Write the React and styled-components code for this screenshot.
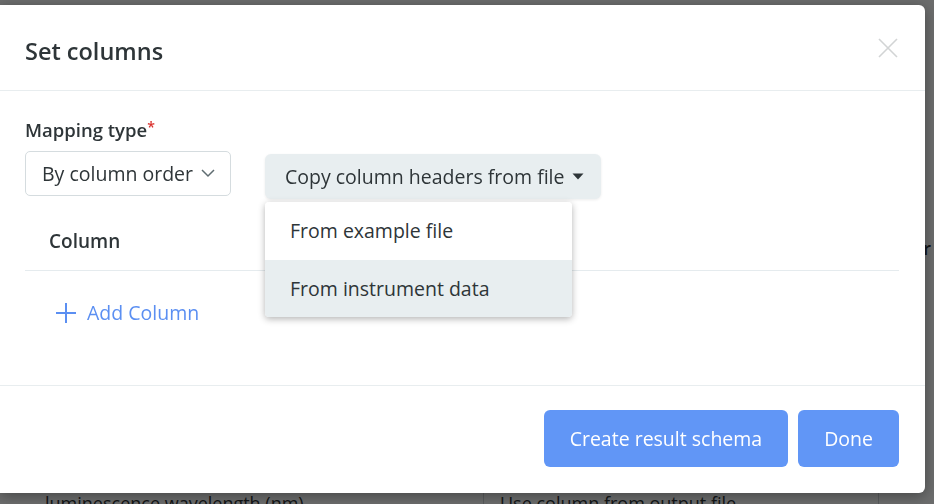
import React from "react";
import styled, { createGlobalStyle } from "styled-components";

const GlobalStyle = createGlobalStyle`
  html, body {
    margin: 0;
    padding: 0;
    height: 100%;
    overflow: hidden;
  }
  body {
    font-family: "Open Sans", "Liberation Sans", sans-serif;
    color: #2e3538;
  }
`;

const App = () => {
  return (
    <>
      <GlobalStyle />
      <Page>
        <PageHeadRow>
          <PageHead>Parameter</PageHead>
        </PageHeadRow>
        <PageRow>
          <PageLabel>luminescence wavelength (nm)</PageLabel>
          <PageSelect>Use column from output file</PageSelect>
        </PageRow>
      </Page>

      <Backdrop>
        <Modal>
          <Header>
            <Title>Set columns</Title>
            <CloseBtn aria-label="close">
              <svg width="20" height="20" viewBox="0 0 20 20">
                <path d="M1 1 L19 19 M19 1 L1 19" stroke="#d2d4d5" strokeWidth="1.6" fill="none" />
              </svg>
            </CloseBtn>
          </Header>

          <Body>
            <Label>
              Mapping type<Required>*</Required>
            </Label>
            <Controls>
              <Select>
                By column order
                <svg width="14" height="9" viewBox="0 0 14 9">
                  <path d="M1 1 L7 7 L13 1" stroke="#5f6c71" strokeWidth="1.5" fill="none" />
                </svg>
              </Select>
              <MenuWrap>
                <CopyBtn>
                  Copy column headers from file
                  <svg width="12" height="7" viewBox="0 0 12 7">
                    <path d="M0.5 0.5 L11.5 0.5 L6 6.5 Z" fill="#2e3538" />
                  </svg>
                </CopyBtn>
                <Menu>
                  <MenuItem>From example file</MenuItem>
                  <MenuItem active>From instrument data</MenuItem>
                </Menu>
              </MenuWrap>
            </Controls>

            <TableHead>
              <Th>Column</Th>
            </TableHead>

            <AddBtn>
              <svg width="22" height="22" viewBox="0 0 22 22">
                <path d="M11 1 V21 M1 11 H21" stroke="#5b8ff2" strokeWidth="2" fill="none" />
              </svg>
              Add Column
            </AddBtn>
          </Body>

          <Footer>
            <PrimaryBtn>Create result schema</PrimaryBtn>
            <PrimaryBtn>Done</PrimaryBtn>
          </Footer>
        </Modal>
      </Backdrop>
    </>
  );
};

export default App;

const Page = styled.div`
  height: 504px;
  background: #fdfefe;
  display: flex;
  flex-direction: column;
`;
const PageHeadRow = styled.div`
  display: flex;
  justify-content: flex-end;
  padding: 236px 3px 0 0;
`;
const PageHead = styled.div`
  font-size: 18px;
  font-weight: 600;
  color: #2e3538;
`;
const PageRow = styled.div`
  display: flex;
  align-items: center;
  padding: 220px 0 0 45px;
`;
const PageLabel = styled.div`
  width: 438px;
  font-size: 18px;
  color: #2e3538;
`;
const PageSelect = styled.div`
  width: 378px;
  height: 44px;
  border: 1px solid #cfd6d9;
  border-radius: 4px;
  padding-left: 16px;
  display: flex;
  align-items: center;
  font-size: 18px;
  color: #2e3538;
`;

const Backdrop = styled.div`
  position: fixed;
  inset: 0;
  background: rgba(0, 2, 2, 0.575);
  display: flex;
  align-items: flex-start;
  padding: 5px 0 0 0;
`;
const Modal = styled.div`
  width: 925px;
  height: 488px;
  background: #fff;
  border-radius: 0 6px 6px 0;
  box-shadow: 0 3px 14px rgba(0, 0, 0, 0.35);
  display: flex;
  flex-direction: column;
`;
const Header = styled.div`
  height: 86px;
  flex-shrink: 0;
  box-sizing: border-box;
  border-bottom: 1px solid #e8edef;
  display: flex;
  align-items: center;
  justify-content: space-between;
  padding: 6px 27px 0 25px;
`;
const Title = styled.h2`
  margin: 0;
  font-size: 23.5px;
  line-height: 30px;
  font-weight: 600;
  color: #2e3538;
`;
const CloseBtn = styled.button`
  border: none;
  background: none;
  padding: 0;
  margin-bottom: 6px;
  display: flex;
  cursor: pointer;
`;
const Body = styled.div`
  flex: 1;
  box-sizing: border-box;
  border-bottom: 1px solid #e8edef;
  padding: 27px 26px 0 25px;
  display: flex;
  flex-direction: column;
`;
const Label = styled.div`
  font-size: 18.5px;
  font-weight: 600;
  line-height: 24px;
  color: #2e3538;
`;
const Required = styled.span`
  color: #d9302c;
  font-size: 14px;
  vertical-align: top;
  line-height: 18px;
`;
const Controls = styled.div`
  display: flex;
  align-items: flex-start;
  gap: 34px;
  margin-top: 9px;
`;
const Select = styled.div`
  width: 206px;
  height: 45px;
  box-sizing: border-box;
  border: 1px solid #d5dcdf;
  border-radius: 5px;
  display: flex;
  align-items: center;
  justify-content: space-between;
  padding: 0 15px 0 16px;
  font-size: 19.5px;
  color: #2e3538;
  white-space: nowrap;
`;
const MenuWrap = styled.div`
  position: relative;
  margin-top: 3px;
`;
const CopyBtn = styled.button`
  height: 45px;
  width: 336px;
  border: none;
  border-radius: 6px;
  background: #e8eef0;
  box-shadow: 0 1px 3px rgba(0, 0, 0, 0.08);
  display: flex;
  align-items: center;
  justify-content: space-between;
  padding: 0 17px 0 20px;
  font-family: inherit;
  font-size: 19.5px;
  color: #2e3538;
  white-space: nowrap;
  cursor: pointer;
`;
const Menu = styled.div`
  position: absolute;
  top: 48px;
  left: 0;
  width: 307px;
  background: #fff;
  border-radius: 4px;
  box-shadow: 0 2px 7px rgba(0, 0, 0, 0.3);
  overflow: hidden;
  z-index: 2;
`;
const MenuItem = styled.div`
  height: 57.5px;
  display: flex;
  align-items: center;
  padding-left: 25px;
  font-size: 19.5px;
  color: #2e3538;
  background: ${(p) => (p.active ? "#e8eef0" : "#fff")};
`;
const TableHead = styled.div`
  margin-top: 21px;
  border-bottom: 1px solid #e5ebee;
  padding: 9px 24px 17px;
`;
const Th = styled.div`
  font-size: 19px;
  font-weight: 600;
  line-height: 24px;
  color: #2e3538;
`;
const AddBtn = styled.button`
  align-self: flex-start;
  margin: 30px 0 0 30px;
  border: none;
  background: none;
  padding: 0;
  display: flex;
  align-items: center;
  gap: 10px;
  font-family: inherit;
  font-size: 19.5px;
  line-height: 24px;
  color: #5b8ff2;
  cursor: pointer;
`;
const Footer = styled.div`
  height: 107px;
  flex-shrink: 0;
  box-sizing: border-box;
  display: flex;
  justify-content: flex-end;
  align-items: flex-start;
  gap: 10px;
  padding: 24px 26px 0 0;
`;
const PrimaryBtn = styled.button`
  height: 57px;
  border: none;
  border-radius: 6px;
  background: #6196f6;
  color: #fff;
  font-family: inherit;
  font-size: 19.5px;
  padding: 0 26px;
  cursor: pointer;
`;
